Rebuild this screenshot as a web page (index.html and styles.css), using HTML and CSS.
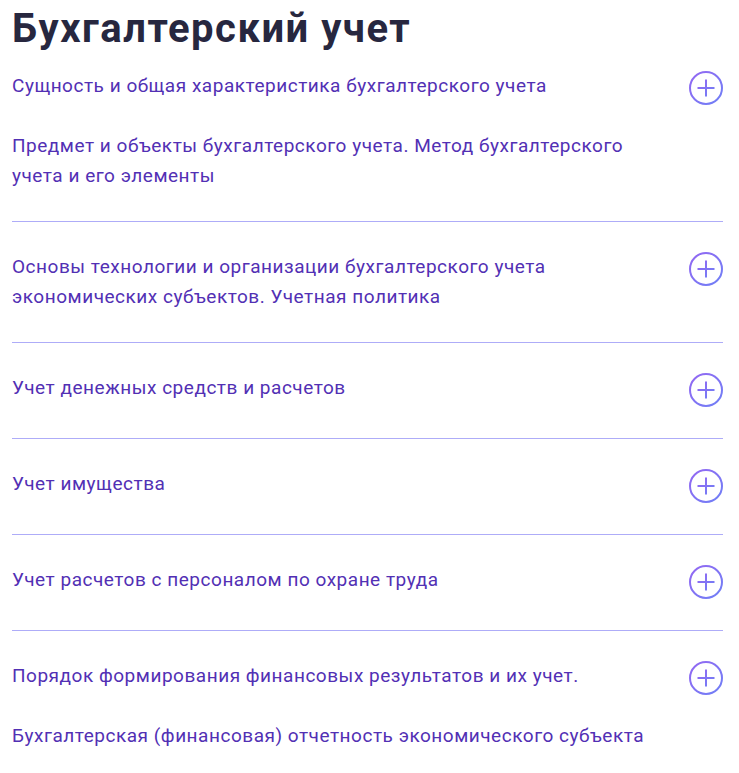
FILE: index.html
```html
<!DOCTYPE html>
<html lang="ru">
<head>
<meta charset="utf-8">
<title>Бухгалтерский учет</title>
<link rel="stylesheet" href="styles.css">
</head>
<body>
<svg width="0" height="0" class="defs" aria-hidden="true">
  <defs>
    <linearGradient id="g" x1="0" y1="0" x2="1" y2="1">
      <stop offset="0" stop-color="#9467f2"/>
      <stop offset="1" stop-color="#6f80f6"/>
    </linearGradient>
  </defs>
</svg>
<main class="page">
  <h1 class="title">Бухгалтерский учет</h1>
  <ul class="list">
    <li class="item first">
      <p class="text">Сущность и общая характеристика бухгалтерского учета<br><br>Предмет и объекты бухгалтерского учета. Метод бухгалтерского учета и его элементы</p>
      <span class="icon"><svg viewBox="0 0 34 34" width="34" height="34"><circle cx="17" cy="17" r="16" fill="none" stroke="url(#g)" stroke-width="2"/><path d="M17 8.5V25.5M8.5 17H25.5" stroke="url(#g)" stroke-width="2" fill="none"/></svg></span>
    </li>
    <li class="item">
      <p class="text">Основы технологии и организации бухгалтерского учета экономических субъектов. Учетная политика</p>
      <span class="icon"><svg viewBox="0 0 34 34" width="34" height="34"><circle cx="17" cy="17" r="16" fill="none" stroke="url(#g)" stroke-width="2"/><path d="M17 8.5V25.5M8.5 17H25.5" stroke="url(#g)" stroke-width="2" fill="none"/></svg></span>
    </li>
    <li class="item">
      <p class="text">Учет денежных средств и расчетов</p>
      <span class="icon"><svg viewBox="0 0 34 34" width="34" height="34"><circle cx="17" cy="17" r="16" fill="none" stroke="url(#g)" stroke-width="2"/><path d="M17 8.5V25.5M8.5 17H25.5" stroke="url(#g)" stroke-width="2" fill="none"/></svg></span>
    </li>
    <li class="item">
      <p class="text">Учет имущества</p>
      <span class="icon"><svg viewBox="0 0 34 34" width="34" height="34"><circle cx="17" cy="17" r="16" fill="none" stroke="url(#g)" stroke-width="2"/><path d="M17 8.5V25.5M8.5 17H25.5" stroke="url(#g)" stroke-width="2" fill="none"/></svg></span>
    </li>
    <li class="item">
      <p class="text">Учет расчетов с персоналом по охране труда</p>
      <span class="icon"><svg viewBox="0 0 34 34" width="34" height="34"><circle cx="17" cy="17" r="16" fill="none" stroke="url(#g)" stroke-width="2"/><path d="M17 8.5V25.5M8.5 17H25.5" stroke="url(#g)" stroke-width="2" fill="none"/></svg></span>
    </li>
    <li class="item">
      <p class="text">Порядок формирования финансовых результатов и их учет.<br><br>Бухгалтерская (финансовая) отчетность экономического субъекта</p>
      <span class="icon"><svg viewBox="0 0 34 34" width="34" height="34"><circle cx="17" cy="17" r="16" fill="none" stroke="url(#g)" stroke-width="2"/><path d="M17 8.5V25.5M8.5 17H25.5" stroke="url(#g)" stroke-width="2" fill="none"/></svg></span>
    </li>
  </ul>
</main>
</body>
</html>
```
FILE: styles.css
```css
html, body {
  margin: 0;
  padding: 0;
  background: #ffffff;
}
.defs {
  position: absolute;
  width: 0;
  height: 0;
}
.page {
  padding: 5px 16px 0 12px;
  font-family: Roboto, "Noto Sans", sans-serif;
}
.title {
  margin: 0 0 18px;
  font-size: 40px;
  line-height: 48px;
  font-weight: 700;
  letter-spacing: 1.5px;
  color: #27273f;
}
.list {
  list-style: none;
  margin: 0;
  padding: 0;
}
.item {
  display: flex;
  justify-content: space-between;
  align-items: flex-start;
  padding: 30px 0;
  border-bottom: 1px solid #aeacf8;
}
.item.first {
  padding-top: 0;
}
.text {
  margin: 0;
  max-width: 650px;
  font-size: 19px;
  line-height: 30px;
  letter-spacing: 0.52px;
  color: #5230b4;
}
.icon {
  display: block;
  width: 34px;
  height: 34px;
  margin-bottom: 1px;
  flex: none;
}
.icon svg {
  display: block;
}
```
